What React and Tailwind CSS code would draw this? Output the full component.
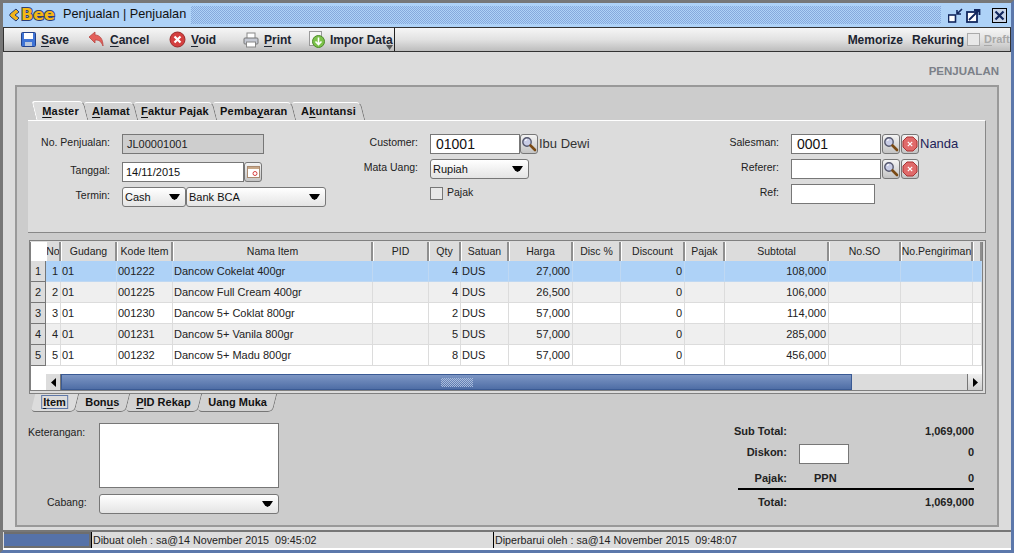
import React from "react";

const Mag = () => (
  <svg width="16" height="16" viewBox="0 0 16 16">
    <circle cx="6" cy="6" r="4.2" fill="#c9cde6" stroke="#55586e" strokeWidth="1.4" />
    <path d="M4 4.5 L6 3.5" stroke="#fff" strokeWidth="1.2" />
    <path d="M9.5 9.5 L14 14" stroke="#7a4a14" strokeWidth="2.6" strokeLinecap="round" />
  </svg>
);
const Del = () => (
  <svg width="16" height="16" viewBox="0 0 16 16">
    <path d="M5 1h6l4 4v6l-4 4H5l-4-4V5z" fill="#e06a6a" stroke="#a33" strokeWidth="1" />
    <path d="M5.8 5.8l4.4 4.4M10.2 5.8l-4.4 4.4" stroke="#fff" strokeWidth="1.2" />
  </svg>
);
const IconBtn = ({ children, gap }) => (
  <div className={`w-[18px] h-[20px] shrink-0 flex items-center justify-center rounded-[3px] border border-[#777] bg-gradient-to-b from-[#f4f4f4] to-[#c4c4c4] ${gap ? "ml-[1px]" : ""}`}>{children}</div>
);
const Arrow = () => (
  <svg width="11" height="6" viewBox="0 0 11 6"><path d="M0 0h11L8 4.5 5.5 6 3 4.5z" fill="#000" /></svg>
);
const Select = ({ w, text }) => (
  <div className={`${w} h-[20px] flex items-center justify-between pl-[2px] pr-[5px] rounded-[3px] border border-[#777] bg-gradient-to-b from-white to-[#e4e4e4] text-[11px] text-[#111] shrink-0`}>
    <span>{text}</span><Arrow />
  </div>
);
const Field = ({ w, text, big }) => (
  <div className={`${w} h-[20px] flex items-center shrink-0 border border-[#777] bg-white ${big ? "pl-[5px] text-[14px] text-[#111]" : "pl-[3px] text-[11px] text-[#111]"}`}>{text}</div>
);
const Label = ({ w, children }) => (
  <div className={`${w} text-right text-[10.5px] text-[#222] shrink-0 whitespace-nowrap pb-[2px]`}>{children}</div>
);
const U = ({ children }) => <span className="underline underline-offset-[2px]">{children}</span>;

const ToolBtn = ({ w, icon, children }) => (
  <div className={`${w} flex items-center gap-[5px] text-[12px] font-bold text-[#1c2430] shrink-0`}>
    {icon}<span>{children}</span>
  </div>
);

const Tab = ({ w, active, children }) => (
  <div className={`${w} relative skew-x-[14deg] flex items-center justify-center text-[11px] tracking-[0.2px] font-bold text-[#111] border-t border-t-white border-r border-r-[#777] rounded-tr-[5px] rounded-tl-[3px] ${active ? "h-[19px] bg-[#dcdcdc] border-l border-l-white" : "h-[18px] bg-[#d2d2d2]"}`}>
    <div className="-skew-x-[14deg]">{children}</div>
  </div>
);
const BottomTab = ({ w, active, children }) => (
  <div className={`${w} h-[18px] -skew-x-[14deg] flex items-center justify-center text-[11px] font-bold text-[#111] border-b border-b-[#777] border-r border-r-[#777] rounded-br-[5px] rounded-bl-[4px] ${active ? "bg-[#dcdcdc]" : "bg-[#d2d2d2]"}`}>
    <div className="skew-x-[14deg]">{children}</div>
  </div>
);

const cols = "grid grid-cols-[15px_15px_56px_56px_200px_56px_32px_48px_64px_48px_64px_40px_104px_72px_72px_1fr]";
const headers = ["No", "Gudang", "Kode Item", "Nama Item", "PID", "Qty", "Satuan", "Harga", "Disc %", "Discount", "Pajak", "Subtotal", "No.SO", "No.Pengiriman", ""];
const rows = [
  ["1", "01", "001222", "Dancow Cokelat 400gr", "4", "DUS", "27,000", "0", "108,000"],
  ["2", "01", "001225", "Dancow Full Cream 400gr", "4", "DUS", "26,500", "0", "106,000"],
  ["3", "01", "001230", "Dancow 5+ Coklat 800gr", "2", "DUS", "57,000", "0", "114,000"],
  ["4", "01", "001231", "Dancow 5+ Vanila 800gr", "5", "DUS", "57,000", "0", "285,000"],
  ["5", "01", "001232", "Dancow 5+ Madu 800gr", "8", "DUS", "57,000", "0", "456,000"],
];

const Cell = ({ children, right, line }) => (
  <div className={`h-[21px] flex items-center overflow-hidden whitespace-nowrap border-r ${line} border-b pl-[1px] pr-[2px] ${right ? "justify-end" : ""}`}>{children}</div>
);
const TotalLabel = ({ children }) => (
  <span className="w-[49px] shrink-0 flex justify-end whitespace-nowrap">{children}</span>
);

export default function App() {
  return (
    <div className="w-[1014px] h-[553px] flex flex-col overflow-hidden border-[3px] border-t-[#777] border-l-[#777] border-r-[#5c78ab] border-b-[#5c78ab] bg-[#dcdcdc] font-['Liberation_Sans',Arial,sans-serif]">
      {/* Title */}
      <div className="h-[24px] shrink-0 flex items-center bg-[#aed2f7]">
        <svg width="12" height="14" viewBox="0 0 12 14" className="ml-[5px] shrink-0">
          <path d="M8 1 L2 6 Q1 8 3 9 L8 13 L11 10 L7 7 L11 4z" fill="#f2b418" stroke="#27407a" strokeWidth="1" />
        </svg>
        <span className="ml-[1px] w-[39px] text-[16px] leading-none font-bold text-[#f5b814] [-webkit-text-stroke:2px_#2c3f78] [paint-order:stroke_fill] font-['DejaVu_Sans',sans-serif]">Bee</span>
        <span className="ml-[3px] text-[12.7px] text-[#111] whitespace-nowrap">Penjualan | Penjualan</span>
        <div className="ml-[5px] flex-1 h-[18px] bg-[repeating-conic-gradient(#86a9dc_0_25%,transparent_0_50%)] bg-[length:2px_2px]" />
        <div className="w-[70px] flex items-center shrink-0 pl-[7px]">
          <svg width="15" height="15" viewBox="0 0 15 15" className="mr-[3px]">
            <rect x="0.5" y="7" width="7" height="7" fill="#fff" stroke="#12275e" strokeWidth="1.6" />
            <path d="M14 1 L9 6 M9 2v4h4" stroke="#12275e" strokeWidth="1.6" fill="none" />
          </svg>
          <svg width="15" height="15" viewBox="0 0 15 15" className="mr-[11px]">
            <rect x="1" y="4" width="10" height="10" fill="#fff" stroke="#12275e" strokeWidth="1.8" />
            <path d="M3 12 L13 2 M8 2h5.500v5" stroke="#12275e" strokeWidth="1.8" fill="none" />
          </svg>
          <svg width="15" height="15" viewBox="0 0 15 15">
            <rect x="0.5" y="0.5" width="14" height="14" fill="#c9d5e8" stroke="#000" />
            <path d="M3.500 3.500l8 8M11.500 3.500l-8 8" stroke="#12275e" strokeWidth="2.2" />
          </svg>
        </div>
      </div>
      {/* Toolbar */}
      <div className="h-[25px] shrink-0 flex items-center border border-[#333] bg-gradient-to-b from-[#f6f6f6] via-[#e2e2e2] to-[#bdbdbd]">
        <div className="w-[391px] h-full flex items-center pl-[17px] border-r border-r-[#222]">
          <ToolBtn w="w-[67px]" icon={<svg width="15" height="15" viewBox="0 0 15 15"><rect x="0.5" y="0.5" width="14" height="14" rx="1" fill="#3f74d6" stroke="#23428c" /><rect x="3" y="1" width="9" height="6" fill="#fff" /><rect x="4" y="10" width="7" height="4" fill="#bcc8dc" /></svg>}><U>S</U>ave</ToolBtn>
          <ToolBtn w="w-[81px]" icon={<svg width="17" height="17" viewBox="0 0 17 17"><path d="M1 6 L7 1 V4 C12 4 15 8 15 15 C13 10 11 9 7 9 V12z" fill="#e45f5a" stroke="#b84642" strokeWidth="0.8" /></svg>}><U>C</U>ancel</ToolBtn>
          <ToolBtn w="w-[74px]" icon={<svg width="17" height="17" viewBox="0 0 17 17"><circle cx="8.5" cy="8.5" r="7.5" fill="#d43f3f" stroke="#9a2a2a" /><path d="M5.5 5.5l6 6M11.5 5.5l-6 6" stroke="#fff" strokeWidth="2.2" /></svg>}><U>V</U>oid</ToolBtn>
          <ToolBtn w="w-[66px]" icon={<svg width="16" height="16" viewBox="0 0 16 16"><rect x="4" y="1" width="8" height="6" fill="#fff" stroke="#888" /><rect x="1" y="6" width="14" height="6" rx="1" fill="#c4c8d2" stroke="#777" /><rect x="3.5" y="10" width="9" height="5" fill="#fff" stroke="#888" /></svg>}><U>P</U>rint</ToolBtn>
          <div className="relative">
            <ToolBtn w="w-[85px]" icon={<svg width="16" height="17" viewBox="0 0 16 17"><rect x="0.5" y="0.5" width="12" height="14" fill="#f6f6f6" stroke="#999" /><circle cx="9.5" cy="10.5" r="6" fill="#7cc24a" stroke="#4e8a2a" /><path d="M9.5 6.5v7M6.5 10.5l3 3 3-3" stroke="#fff" strokeWidth="1.6" fill="none" /></svg>}>Impor Data</ToolBtn>
            <svg width="7" height="5" viewBox="0 0 7 5" className="absolute right-[1px] bottom-[-1px]"><path d="M0 0h7L3.5 5z" fill="#555" /></svg>
          </div>
        </div>
        <div className="flex-1 flex items-center justify-end text-[12px] font-bold text-[#1c2430]">
          <span>Memorize</span>
          <span className="ml-[9px]">Rekuring</span>
          <div className="ml-[3px] w-[13px] h-[13px] border border-[#aaa] bg-[#e8e8e8]" />
          <span className="ml-[4px] w-[26px] text-[11px] whitespace-nowrap text-[#a8a8a8]"><U>D</U>raft</span>
        </div>
      </div>
      {/* Page */}
      <div className="flex-1 min-h-0 flex flex-col pl-[12px] pr-[12px]">
        <div className="h-[33px] shrink-0 flex items-center justify-end pt-[6px] text-[11.5px] font-bold text-[#7b8088]">PENJUALAN</div>
        <div className="h-[442px] shrink-0 flex flex-col bg-[#cccccc] border-2 border-[#999] px-[11px]">
          {/* Top tabs */}
          <div className="h-[33px] shrink-0 flex items-end pl-[6px]">
            <Tab w="w-[52px]" active><span><U>M</U>aster</span></Tab>
            <Tab w="w-[50px]"><span><U>A</U>lamat</span></Tab>
            <Tab w="w-[79px]"><span><U>F</U>aktur Pajak</span></Tab>
            <Tab w="w-[79px]"><span>Pemba<U>y</U>aran</span></Tab>
            <Tab w="w-[69px]"><span>A<U>k</U>untansi</span></Tab>
          </div>
          {/* Master panel */}
          <div className="h-[113px] shrink-0 flex bg-[#dcdcdc] border-t border-t-white border-r border-r-[#888] border-b border-b-[#888] pt-[13px]">
            <div className="w-[333px] flex flex-col shrink-0">
              <div className="h-[20px] flex items-center">
                <Label w="w-[82px]">No. Penjualan:</Label>
                <div className="ml-[12px] w-[142px] h-[20px] flex items-center pl-[4px] border border-[#777] bg-[#cecece] text-[11px] text-[#222]">JL00001001</div>
              </div>
              <div className="mt-[8px] h-[20px] flex items-center">
                <Label w="w-[82px]">Tanggal:</Label>
                <div className="ml-[12px] flex">
                  <Field w="w-[122px]" text="14/11/2015" />
                  <IconBtn><svg width="13" height="12" viewBox="0 0 13 12"><rect x="0.5" y="0.5" width="12" height="11" fill="#fff" stroke="#a98a70" /><rect x="1" y="1" width="11" height="2" fill="#c8a888" /><circle cx="8" cy="7.5" r="2" fill="none" stroke="#d84040" /></svg></IconBtn>
                </div>
              </div>
              <div className="mt-[5px] h-[20px] flex items-center">
                <Label w="w-[82px]">Termin:</Label>
                <div className="ml-[12px] flex">
                  <Select w="w-[64px]" text="Cash" />
                  <Select w="w-[140px]" text="Bank BCA" />
                </div>
              </div>
            </div>
            <div className="w-[361px] flex flex-col shrink-0">
              <div className="h-[20px] flex items-center">
                <Label w="w-[57px]">Customer:</Label>
                <div className="ml-[12px] flex items-center">
                  <Field w="w-[90px]" text="01001" big />
                  <IconBtn><Mag /></IconBtn>
                  <span className="ml-[1px] text-[13px] text-[#333]">Ibu Dewi</span>
                </div>
              </div>
              <div className="mt-[5px] h-[20px] flex items-center">
                <Label w="w-[57px]">Mata Uang:</Label>
                <div className="ml-[12px]"><Select w="w-[99px]" text="Rupiah" /></div>
              </div>
              <div className="mt-[7px] h-[14px] flex items-center pl-[69px]">
                <div className="w-[13px] h-[13px] border border-[#777] bg-[#e8e8e8]" />
                <span className="ml-[4px] text-[10.5px] text-[#222]">Pajak</span>
              </div>
            </div>
            <div className="flex-1 flex flex-col">
              <div className="h-[20px] flex items-center">
                <Label w="w-[57px]">Salesman:</Label>
                <div className="ml-[12px] flex items-center">
                  <Field w="w-[90px]" text="0001" big />
                  <IconBtn gap><Mag /></IconBtn>
                  <IconBtn gap><Del /></IconBtn>
                  <span className="ml-[1px] text-[13px] text-[#222258]">Nanda</span>
                </div>
              </div>
              <div className="mt-[5px] h-[20px] flex items-center">
                <Label w="w-[57px]">Referer:</Label>
                <div className="ml-[12px] flex items-center">
                  <Field w="w-[90px]" />
                  <IconBtn gap><Mag /></IconBtn>
                  <IconBtn gap><Del /></IconBtn>
                </div>
              </div>
              <div className="mt-[5px] h-[20px] flex items-center">
                <Label w="w-[57px]">Ref:</Label>
                <div className="ml-[12px]"><Field w="w-[84px]" /></div>
              </div>
            </div>
          </div>
          {/* Table */}
          <div className="mt-[7px] h-[154px] shrink-0 flex flex-col border border-[#808080] bg-[#dcdcdc] pt-[1px] pr-[2px] pb-[2px] ml-[1px]">
            <div className="flex-1 min-h-0 flex flex-col border-l border-r border-b border-[#808080] bg-white">
              <div className={`${cols} h-[19px] shrink-0`}>
                <div className="bg-white" />
                {headers.map((h, i) => (
                  <div key={i} className="h-[19px] flex items-center justify-center overflow-hidden whitespace-nowrap text-[10.5px] text-[#222] bg-[#dcdcdc] border-r-2 border-r-[#8f8f8f] border-l border-l-white">{h}</div>
                ))}
              </div>
              <div className="flex-1 min-h-0 text-[11px] text-[#222]">
                {rows.map((r, i) => {
                  const bg = i === 0 ? "bg-[#aed2f7]" : i % 2 ? "bg-[#efefef]" : "bg-white";
                  const line = i === 0 ? "border-[#bfd8f2]" : "border-[#dcdcdc]";
                  return (
                    <div key={i} className={`${cols} ${bg}`}>
                      <div className="h-[21px] flex items-center justify-center bg-[#dcdcdc] border-r border-b border-[#777] text-[11px]">{i + 1}</div>
                      <Cell right line={line}>{r[0]}</Cell>
                      <Cell line={line}>{r[1]}</Cell>
                      <Cell line={line}>{r[2]}</Cell>
                      <Cell line={line}>{r[3]}</Cell>
                      <Cell line={line} />
                      <Cell right line={line}>{r[4]}</Cell>
                      <Cell line={line}>{r[5]}</Cell>
                      <Cell right line={line}>{r[6]}</Cell>
                      <Cell line={line} />
                      <Cell right line={line}>{r[7]}</Cell>
                      <Cell line={line} />
                      <Cell right line={line}>{r[8]}</Cell>
                      <Cell line={line} />
                      <Cell line={line} />
                      <Cell line={line} />
                    </div>
                  );
                })}
              </div>
              {/* Scrollbar */}
              <div className="h-[16px] shrink-0 flex items-stretch pl-[15px] bg-white">
                <div className="w-[15px] flex items-center justify-center bg-[#dcdcdc] border-r border-[#777]">
                  <svg width="5" height="9" viewBox="0 0 5 9"><path d="M5 0v9L0 4.5z" fill="#000" /></svg>
                </div>
                <div className="flex-1 flex bg-[#dcdcdc]">
                  <div className="w-[791px] flex items-center justify-center bg-gradient-to-b from-[#7d96c4] to-[#4f6ea6] border border-[#3a5a94]">
                    <div className="w-[32px] h-[9px] bg-[repeating-conic-gradient(#a9bcdc_0_25%,transparent_0_50%)] bg-[length:2px_2px]" />
                  </div>
                </div>
                <div className="w-[15px] flex items-center justify-center bg-gradient-to-b from-[#f0f0f0] to-[#cfcfcf] border-l border-[#777]">
                  <svg width="5" height="9" viewBox="0 0 5 9"><path d="M0 0v9L5 4.5z" fill="#000" /></svg>
                </div>
              </div>
            </div>
          </div>
          {/* Bottom tabs */}
          <div className="h-[19px] shrink-0 flex pl-[5px]">
            <BottomTab w="w-[44px]" active><span className="border border-[#5f78a8] px-[1px] leading-[12px]"><U>I</U>tem</span></BottomTab>
            <BottomTab w="w-[51px]"><span>Bon<U>u</U>s</span></BottomTab>
            <BottomTab w="w-[72px]"><span><U>P</U>ID Rekap</span></BottomTab>
            <BottomTab w="w-[75px]"><span>Uang Muka</span></BottomTab>
          </div>
          {/* Footer area */}
          <div className="flex-1 min-h-0 flex pt-[10px]">
            <div className="w-[710px] shrink-0 flex flex-col">
              <div className="flex">
                <div className="w-[71px] text-[10.5px] text-[#222] pt-[2px]">Keterangan:</div>
                <div className="w-[180px] h-[65px] border border-[#777] bg-white" />
              </div>
              <div className="mt-[6px] flex items-center">
                <div className="w-[71px] pl-[19px] text-[10.5px] text-[#222] pb-[2px]">Cabang:</div>
                <Select w="w-[180px]" />
              </div>
            </div>
            <div className="w-[236px] shrink-0 text-[11px] font-bold text-[#222] pt-[1px]">
              <div className="h-[14px] flex items-center">
                <TotalLabel>Sub Total:</TotalLabel>
                <span className="flex-1 text-right">1,069,000</span>
              </div>
              <div className="mt-[6px] h-[20px] flex items-center">
                <span className="w-[49px] shrink-0 text-right pb-[3px]">Diskon:</span>
                <div className="ml-[12px] w-[50px] h-[20px] border border-[#777] bg-white" />
                <span className="flex-1 text-right pb-[3px]">0</span>
              </div>
              <div className="mt-[7px] h-[14px] flex items-center">
                <TotalLabel>Pajak:</TotalLabel>
                <span className="ml-[27px]">PPN</span>
                <span className="flex-1 text-right">0</span>
              </div>
              <div className="mt-[3px] border-t-2 border-black h-[26px] flex items-center">
                <TotalLabel>Total:</TotalLabel>
                <span className="flex-1 text-right">1,069,000</span>
              </div>
            </div>
          </div>
        </div>
      </div>
      {/* Status */}
      <div className="h-[20px] shrink-0 flex items-stretch mt-auto border-t-2 border-t-[#777] border-b-2 border-b-white bg-[#dcdcdc] text-[10.7px] text-[#222]">
        <div className="w-[87px] ml-[1px] bg-[#5672a8] border-2 border-[#6e6e6e] border-l-0" />
        <div className="w-[403px] flex items-center pl-[1px] border-l border-l-black border-r border-r-black whitespace-nowrap">Dibuat oleh : sa@14 November 2015&nbsp; 09:45:02</div>
        <div className="flex-1 flex items-center pl-[1px] whitespace-nowrap">Diperbarui oleh : sa@14 November 2015&nbsp; 09:48:07</div>
      </div>
    </div>
  );
}
